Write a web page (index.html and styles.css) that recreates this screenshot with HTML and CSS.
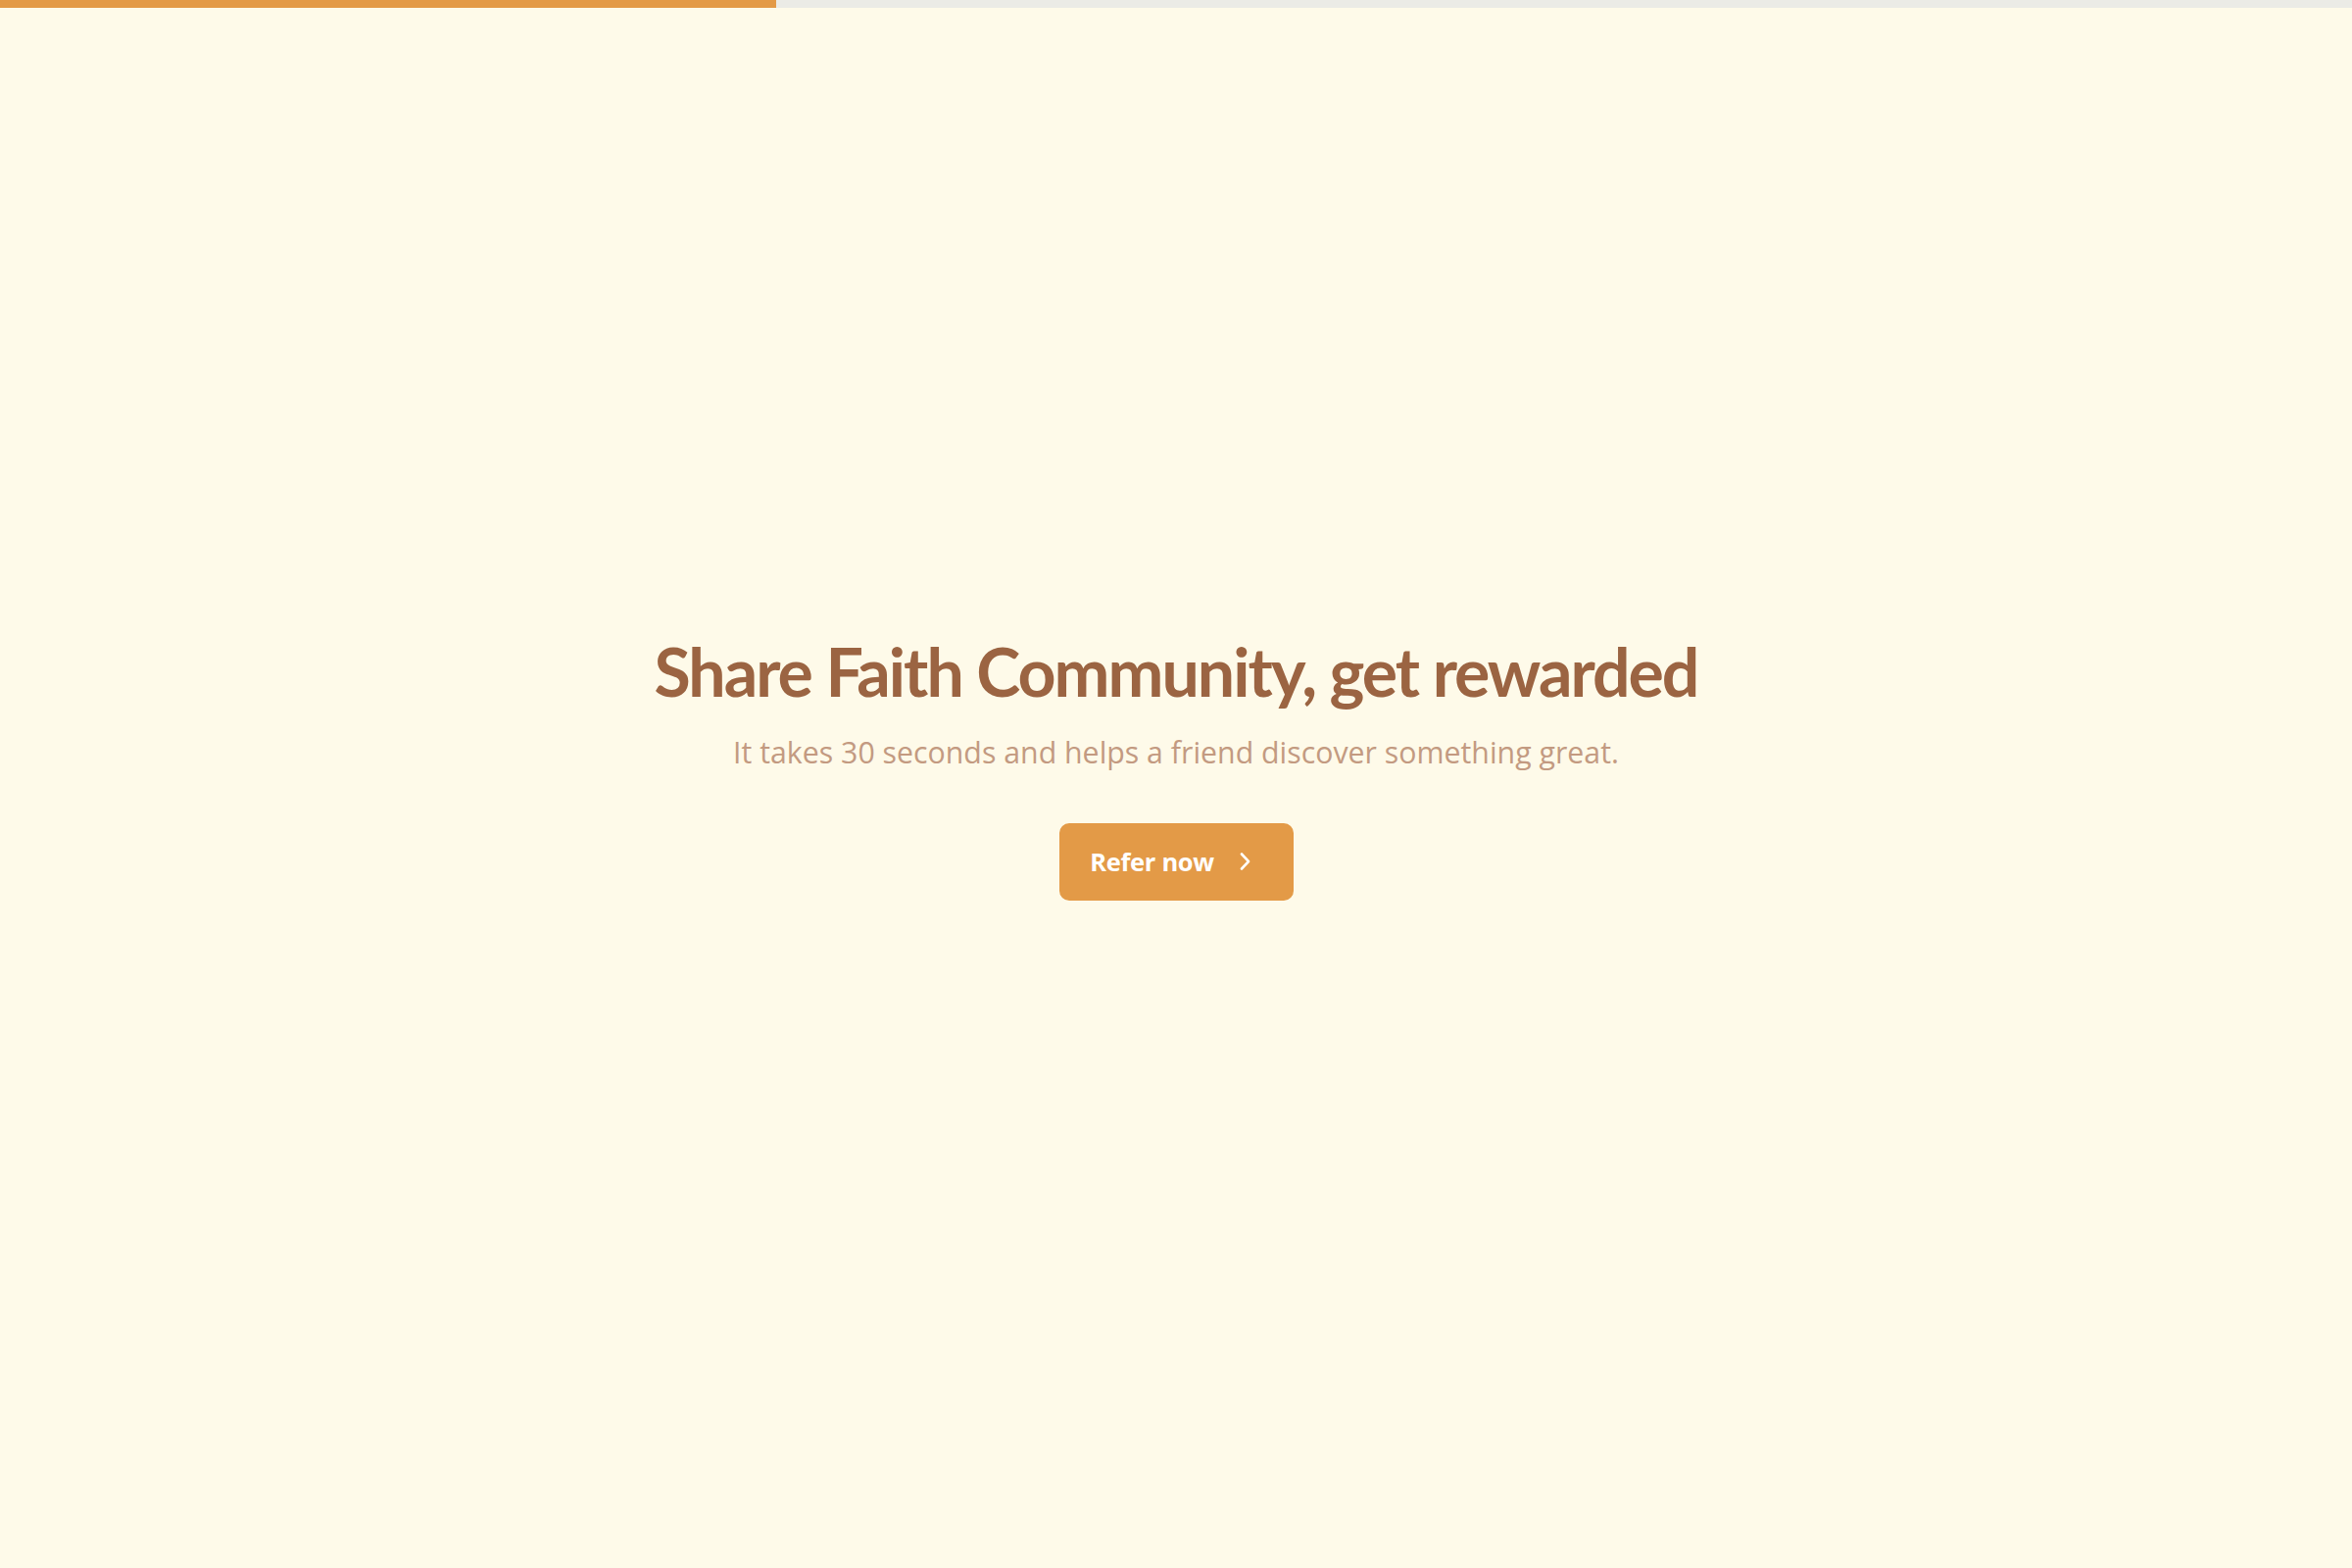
FILE: index.html
```html
<!DOCTYPE html>
<html lang="en">
<head>
<meta charset="utf-8">
<title>Share Faith Community</title>
<link rel="stylesheet" href="styles.css">
</head>
<body>
<div class="progress"><div class="progress-fill"></div></div>
<main class="hero">
  <h1 class="title">Share Faith Community, get rewarded</h1>
  <p class="subtitle">It takes 30 seconds and helps a friend discover something great.</p>
  <button class="cta" type="button">
    <span class="cta-label">Refer now</span>
    <svg class="cta-icon" width="13" height="20" viewBox="0 0 13 20" aria-hidden="true"><path d="M3 2.5 L10 10 L3 17.5" fill="none" stroke="currentColor" stroke-width="2.6" stroke-linecap="round" stroke-linejoin="round"/></svg>
  </button>
</main>
</body>
</html>
```
FILE: styles.css
```css
* { box-sizing: border-box; }
html, body { margin: 0; padding: 0; }
body {
  background: #fefae9;
  font-family: "Open Sans", "Noto Sans", "Liberation Sans", sans-serif;
  height: 1600px;
  display: flex;
  flex-direction: column;
}
.progress {
  height: 8px;
  background: #ebebe6;
  flex: none;
}
.progress-fill {
  width: 33%;
  height: 100%;
  background: #e39a47;
}
.hero {
  flex: 1;
  display: flex;
  flex-direction: column;
  align-items: center;
  justify-content: center;
  padding-bottom: 48px;
}
.title {
  margin: 0;
  font-family: Lato, "Open Sans", sans-serif;
  font-size: 68px;
  line-height: 86px;
  font-weight: 700;
  color: #9b6442;
  letter-spacing: -2px;
}
.subtitle {
  margin: 0;
  margin-top: 18px;
  font-size: 30.3px;
  line-height: 44px;
  color: #c39a81;
}
.cta {
  margin-top: 50px;
  width: 239px;
  height: 79px;
  border: 0;
  border-radius: 10px;
  background: #e39a47;
  color: #fff;
  font-family: inherit;
  font-size: 25.5px;
  font-weight: 700;
  letter-spacing: -0.3px;
  display: flex;
  align-items: center;
  justify-content: center;
  gap: 25px;
  padding: 0 11px 0 0;
}
.cta-icon { display: block; }
```
